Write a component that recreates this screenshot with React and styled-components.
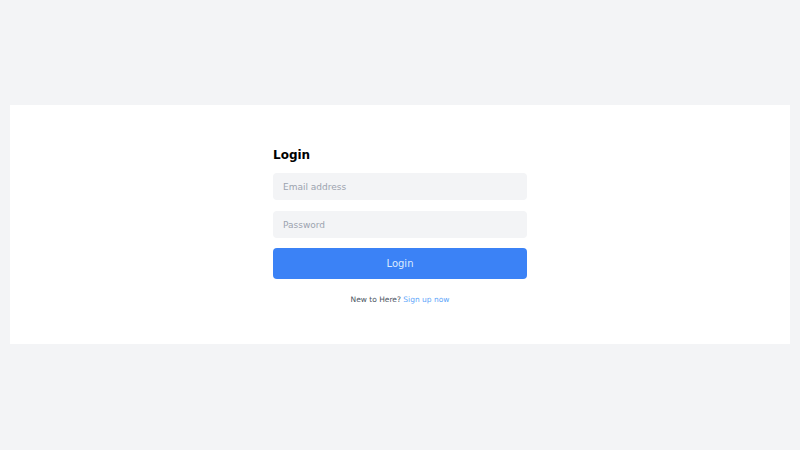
import React from 'react'
import styled, { createGlobalStyle } from 'styled-components'

const GlobalStyle = createGlobalStyle`
  html, body {
    margin: 0;
    padding: 0;
    background: #f3f4f6;
    font-family: "DejaVu Sans", sans-serif;
  }
`

const Page = styled.div`
  height: 449px;
  padding: 0 10px;
  box-sizing: border-box;
  display: flex;
  align-items: center;
`

const Panel = styled.div`
  width: 100%;
  height: 239px;
  padding-top: 41px;
  box-sizing: border-box;
  background: #ffffff;
  display: flex;
  align-items: flex-start;
  justify-content: center;
`

const Form = styled.form`
  width: 254px;
  display: flex;
  flex-direction: column;
`

const Title = styled.h2`
  margin: 1px 0 10px;
  font-size: 12px;
  font-weight: bold;
  color: #000;
  line-height: 16px;
`

const Input = styled.input`
  height: 27px;
  margin-bottom: ${(p) => p.$gap || 11}px;
  padding: 0 10px;
  box-sizing: border-box;
  border: none;
  border-radius: 4px;
  background: #f3f4f6;
  font-family: inherit;
  font-size: 9px;
  color: #374151;
  outline: none;

  &::placeholder {
    color: #9ca3af;
  }
`

const Button = styled.button`
  height: 31px;
  border: none;
  border-radius: 4px;
  background: #3b82f6;
  color: #dbeafe;
  font-family: inherit;
  font-size: 10px;
  cursor: pointer;
`

const Footer = styled.p`
  margin: 16px 0 0;
  text-align: center;
  font-size: 7.5px;
  color: #4b5563;
`

const Link = styled.a`
  color: #60a5fa;
  text-decoration: none;
`

const App = () => {
  return (
    <>
      <GlobalStyle />
      <Page>
        <Panel>
          <Form onSubmit={(e) => e.preventDefault()}>
            <Title>Login</Title>
            <Input type="email" placeholder="Email address" />
            <Input type="password" placeholder="Password" $gap={10} />
            <Button type="submit">Login</Button>
            <Footer>
              New to Here? <Link href="#">Sign up now</Link>
            </Footer>
          </Form>
        </Panel>
      </Page>
    </>
  )
}

export default App
